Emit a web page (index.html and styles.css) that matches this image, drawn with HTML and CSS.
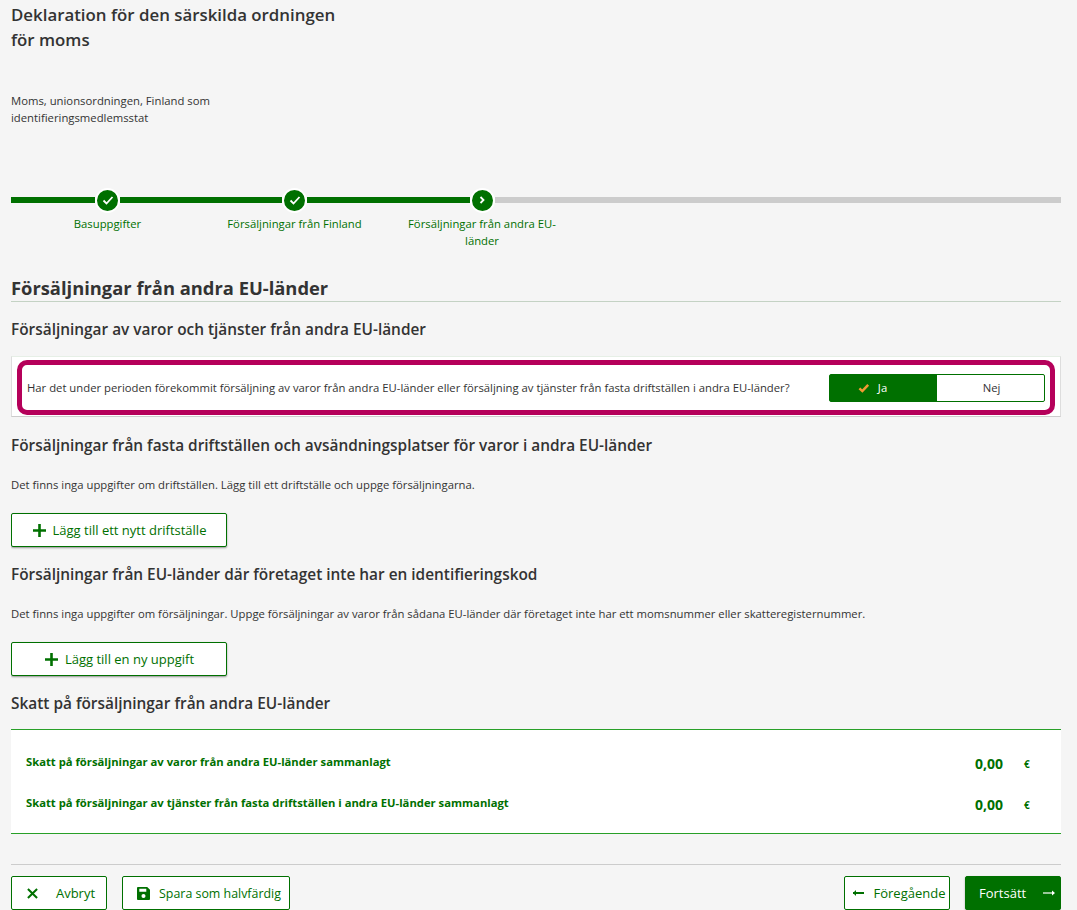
FILE: index.html
```html
<!DOCTYPE html>
<html lang="sv">
<head>
    <meta charset="UTF-8">
    <title>Deklaration för den särskilda ordningen för moms</title>
    <link rel="stylesheet" href="styles.css">
</head>
<body>
    <div class="page">
        <h1 class="title">Deklaration för den särskilda ordningen för moms</h1>
        <p class="subtitle">Moms, unionsordningen, Finland som identifieringsmedlemsstat</p>

        <div class="steps">
            <div class="step">
                <div class="track">
                    <span class="line"></span>
                    <span class="dot">
                        <svg width="14" height="14" viewBox="0 0 14 14"><path d="M2.5 7.5l3 3 6-6.500" fill="none" stroke="#fff" stroke-width="1.800"/></svg>
                    </span>
                    <span class="line"></span>
                </div>
                <div class="step-label">Basuppgifter</div>
            </div>
            <div class="step">
                <div class="track">
                    <span class="line"></span>
                    <span class="dot">
                        <svg width="14" height="14" viewBox="0 0 14 14"><path d="M2.5 7.5l3 3 6-6.500" fill="none" stroke="#fff" stroke-width="1.800"/></svg>
                    </span>
                    <span class="line"></span>
                </div>
                <div class="step-label">Försäljningar från Finland</div>
            </div>
            <div class="step">
                <div class="track">
                    <span class="line"></span>
                    <span class="dot">
                        <svg width="14" height="14" viewBox="0 0 14 14"><path d="M5.5 4l3 3-3 3" fill="none" stroke="#fff" stroke-width="1.800"/></svg>
                    </span>
                    <span class="line rest"></span>
                </div>
                <div class="step-label">Försäljningar från andra EU-länder</div>
            </div>
            <div class="step-rest"></div>
        </div>

        <h2 class="section-title">Försäljningar från andra EU-länder</h2>

        <h3 class="sub-title first">Försäljningar av varor och tjänster från andra EU-länder</h3>

        <div class="question-card">
            <div class="question">
                <span class="question-text">Har det under perioden förekommit försäljning av varor från andra EU-länder eller försäljning av tjänster från fasta driftställen i andra EU-länder?</span>
                <div class="toggle">
                    <span class="toggle-option on">
                        <svg width="12" height="10" viewBox="0 0 14 12"><path d="M1.500 6.500l3.500 3.200 7-7.500" fill="none" stroke="#f39a33" stroke-width="3"/></svg>
                        Ja
                    </span>
                    <span class="toggle-option off">Nej</span>
                </div>
            </div>
        </div>

        <h3 class="sub-title">Försäljningar från fasta driftställen och avsändningsplatser för varor i andra EU-länder</h3>
        <p class="info">Det finns inga uppgifter om driftställen. Lägg till ett driftställe och uppge försäljningarna.</p>
        <button class="btn add">
            <svg width="13" height="13" viewBox="0 0 13 13"><path d="M6.500 0v13M0 6.500h13" stroke="#007000" stroke-width="2.600"/></svg>
            Lägg till ett nytt driftställe
        </button>

        <h3 class="sub-title tight">Försäljningar från EU-länder där företaget inte har en identifieringskod</h3>
        <p class="info">Det finns inga uppgifter om försäljningar. Uppge försäljningar av varor från sådana EU-länder där företaget inte har ett momsnummer eller skatteregisternummer.</p>
        <button class="btn add">
            <svg width="13" height="13" viewBox="0 0 13 13"><path d="M6.500 0v13M0 6.500h13" stroke="#007000" stroke-width="2.600"/></svg>
            Lägg till en ny uppgift
        </button>

        <h3 class="sub-title tight">Skatt på försäljningar från andra EU-länder</h3>

        <div class="totals">
            <div class="total-row">
                <span class="total-label">Skatt på försäljningar av varor från andra EU-länder sammanlagt</span>
                <span class="total-value">0,00</span>
                <span class="total-unit">€</span>
            </div>
            <div class="total-row">
                <span class="total-label">Skatt på försäljningar av tjänster från fasta driftställen i andra EU-länder sammanlagt</span>
                <span class="total-value">0,00</span>
                <span class="total-unit">€</span>
            </div>
        </div>

        <div class="footer">
            <div class="footer-group">
                <button class="btn cancel">
                    <svg width="11" height="11" viewBox="0 0 12 12"><path d="M1 1l10 10M11 1L1 11" stroke="#007000" stroke-width="2.200"/></svg>
                    Avbryt
                </button>
                <button class="btn save">
                    <svg width="13" height="13" viewBox="0 0 14 14"><path fill="#007000" fill-rule="evenodd" d="M1 0h10l3 3v10a1 1 0 0 1-1 1H1a1 1 0 0 1-1-1V1a1 1 0 0 1 1-1zM2.500 1.800v3.400h7.500V1.800zM7 7.500a2.200 2.200 0 1 0 0 4.400 2.200 2.200 0 0 0 0-4.400z"/></svg>
                    Spara som halvfärdig
                </button>
            </div>
            <div class="footer-group">
                <button class="btn back">
                    <svg width="11" height="8" viewBox="0 0 11 8"><path d="M0 4h11" stroke="#007000" stroke-width="2"/><path d="M0 4l3-3v6z" fill="#007000"/></svg>
                    Föregående
                </button>
                <button class="btn next">
                    Fortsätt
                    <svg width="12" height="8" viewBox="0 0 12 8"><path d="M0 4h11" stroke="#fff" stroke-width="1.200"/><path d="M12 4L9 1.500v5z" fill="#fff"/></svg>
                </button>
            </div>
        </div>
    </div>
</body>
</html>
```

FILE: styles.css
```css
* {
    box-sizing: border-box;
}

body {
    margin: 0;
    background-color: #f5f5f5;
    color: #333;
    font-family: "Open Sans", "Noto Sans", Arial, sans-serif;
}

.page {
    width: 1050px;
    height: 910px;
    margin-left: 11px;
    overflow: hidden;
}

.title {
    width: 340px;
    margin: 2px 0 0;
    font-size: 16.85px;
    line-height: 25px;
    font-weight: 600;
}

.subtitle {
    width: 230px;
    margin: 40px 0 0;
    font-size: 11.3px;
    line-height: 17px;
}

/* steps */
.steps {
    display: flex;
    margin-top: 62px;
}

.step {
    width: 194px;
}

.step:first-child {
    width: 193px;
}

.step:nth-child(2) {
    width: 181px;
}

.step-rest {
    flex: 1;
    height: 6px;
    margin-top: 9px;
    background: #ccc;
}

.track {
    display: flex;
    align-items: center;
    height: 24px;
}

.line {
    flex: 1;
    height: 6px;
    background: #007000;
}

.line.rest {
    background: #ccc;
}

.dot {
    display: flex;
    flex-shrink: 0;
    align-items: center;
    justify-content: center;
    width: 25px;
    height: 25px;
    border: 2px solid #fff;
    border-radius: 50%;
    background: #007000;
}

.step-label {
    margin-top: 3px;
    color: #007000;
    font-size: 11.3px;
    line-height: 17px;
    text-align: center;
}

.step:nth-child(3) .step-label {
    padding: 0 22px;
}

/* headings */
.section-title {
    height: 27px;
    margin: 26px 0 0;
    border-bottom: 1px solid #c4d2c4;
    font-size: 18.35px;
    line-height: 26px;
    font-weight: 700;
}

.sub-title {
    margin: 0 0 -2px;
    font-size: 15.4px;
    line-height: 24px;
    font-weight: 600;
}

.sub-title.first {
    margin-top: 16px;
}

.sub-title.tight {
    margin-top: 16px;
}

/* question */
.question-card {
    height: 61px;
    margin-top: 16px;
    padding: 3px 5px 0;
    background: #fff;
    border-top: 1px solid #e6efe6;
    border-right: 1px solid #ddd;
    border-bottom: 1px solid #ccc;
    border-left: 1px solid #ddd;
}

.question {
    display: flex;
    align-items: center;
    justify-content: space-between;
    height: 55px;
    padding: 0 5px;
    border: 5px solid #b5005a;
    border-radius: 10px;
}

.question-text {
    font-size: 11.3px;
}

.toggle {
    display: flex;
    width: 216px;
    height: 28px;
    background: #fff;
    border: 1px solid #007000;
    border-radius: 2px;
    font-size: 11.3px;
}

.toggle-option {
    display: flex;
    align-items: center;
    justify-content: center;
    width: 50%;
}

.toggle-option.on {
    gap: 8px;
    padding-right: 22px;
    background: #007000;
    color: #fff;
}

.toggle-option.off {
    padding-left: 2px;
}

.question-card + .sub-title {
    margin-top: 17px;
}

.sub-title + .info {
    margin-top: 20px;
}

.info {
    margin: 0;
    font-size: 11.3px;
    line-height: 17px;
}

/* buttons */
.btn {
    display: inline-flex;
    align-items: center;
    justify-content: center;
    height: 34px;
    padding: 0;
    background: #fff;
    border: 1px solid #007000;
    border-radius: 2px;
    color: #007000;
    font-family: inherit;
    font-size: 13px;
}

.add {
    gap: 7px;
    width: 216px;
    margin-top: 20px;
    padding-left: 1px;
    box-shadow: 0 1px 2px rgba(0, 0, 0, 0.4);
}

.cancel {
    gap: 18px;
    width: 96px;
    padding-left: 4px;
}

.save {
    gap: 9px;
    width: 168px;
    padding-left: 6px;
    font-size: 12.4px;
}

.back {
    gap: 10px;
    width: 106px;
    padding-left: 4px;
}

.next {
    justify-content: flex-start;
    gap: 17px;
    width: 96px;
    padding-left: 13px;
    background: #007000;
    color: #fff;
    box-shadow: 0 1px 2px rgba(0, 0, 0, 0.3);
}

/* totals */
.totals {
    height: 105px;
    margin-top: 15px;
    padding: 13px 15px 0;
    background: #fff;
    border-top: 1px solid #28a028;
    border-bottom: 1px solid #28a028;
}

.total-row {
    display: flex;
    align-items: center;
    height: 41px;
    color: #007000;
}

.total-label {
    flex: 1;
    margin-top: -5px;
    font-size: 11.25px;
    font-weight: 700;
}

.total-value {
    font-size: 14px;
    font-weight: 700;
}

.total-unit {
    width: 43px;
    padding-left: 21px;
    font-size: 10px;
    font-weight: 700;
}

/* footer */
.footer {
    display: flex;
    justify-content: space-between;
    margin-top: 30px;
    padding-top: 11px;
    border-top: 1px solid #ccc;
}

.footer-group {
    display: flex;
    gap: 15px;
}
```
